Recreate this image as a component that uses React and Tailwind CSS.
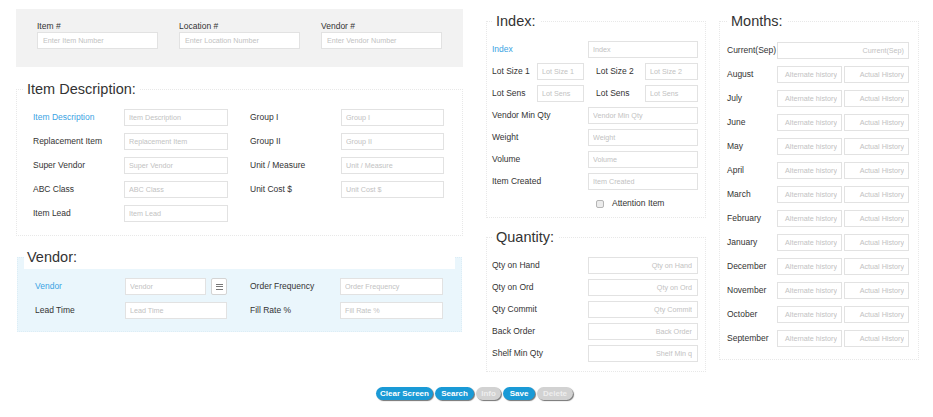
import React from "react";

const inputBase =
  "h-[17px] border border-[#e2e2e2] bg-white px-[4px] text-[7.2px] text-[#555] placeholder:text-[#c2c2c2] outline-none min-w-0";

function Field({ placeholder, className = "", right = false }) {
  return (
    <input
      readOnly
      placeholder={placeholder}
      className={`${inputBase} ${right ? "text-right" : "text-left"} ${className}`}
    />
  );
}

function Label({ children, blue = false, className = "" }) {
  return (
    <span
      className={`text-[8.5px] leading-[17px] whitespace-nowrap ${
        blue ? "text-[#3aa3e3]" : "text-[#333]"
      } ${className}`}
    >
      {children}
    </span>
  );
}

function Legend({ children, className = "" }) {
  return (
    <legend
      className={`h-[24px] text-[14.5px] leading-[24px] text-[#333] ${className}`}
    >
      {children}
    </legend>
  );
}

function Pair({ label, placeholder, blue, labelW, inputW }) {
  return (
    <div className="flex items-center">
      <Label blue={blue} className={labelW}>
        {label}
      </Label>
      <Field placeholder={placeholder} className={inputW} />
    </div>
  );
}

const months = [
  "August",
  "July",
  "June",
  "May",
  "April",
  "March",
  "February",
  "January",
  "December",
  "November",
  "October",
  "September",
];

function Btn({ children, active, w }) {
  return (
    <div
      className={`flex h-[13px] items-center justify-center rounded-full text-[8px] font-bold leading-none shadow-[1px_1px_1px_rgba(0,0,0,0.55)] ${w} ${
        active ? "bg-[#1a9ad6] text-white" : "bg-[#d2d2d2] text-[#eeeeee]"
      }`}
    >
      {children}
    </div>
  );
}

export default function App() {
  return (
    <div className="w-[933px] h-[417px] bg-white font-['Liberation_Sans',Arial,sans-serif] overflow-hidden">
      <div className="flex items-start pl-[16px] pt-[9px]">
        {/* Left column */}
        <div className="w-[447px] flex flex-col">
          {/* Top bar */}
          <div className="h-[58px] bg-[#f2f2f2] pl-[21px] pt-[12px] flex gap-[21px]">
            {[
              ["Item #", "Enter Item Number"],
              ["Location #", "Enter Location Number"],
              ["Vendor #", "Enter Vendor Number"],
            ].map(([l, p]) => (
              <div key={l} className="flex flex-col w-[121px]">
                <span className="text-[8.5px] leading-[11px] text-[#333]">{l}</span>
                <Field placeholder={p} className="w-[121px] px-[5px]" />
              </div>
            ))}
          </div>

          {/* Item Description */}
          <fieldset className="mt-[10px] border border-dotted border-[#e8e8e8] px-[7px]">
            <Legend className="px-[3px]">Item Description:</Legend>
            <div className="pl-[9px] pt-[8px] pb-[13px] grid grid-cols-[195px_194px] gap-x-[22px] gap-y-[7px]">
              <Pair label="Item Description" placeholder="Item Description" blue labelW="w-[91px]" inputW="w-[104px]" />
              <Pair label="Group I" placeholder="Group I" labelW="w-[91px]" inputW="w-[103px]" />
              <Pair label="Replacement Item" placeholder="Replacement Item" labelW="w-[91px]" inputW="w-[104px]" />
              <Pair label="Group II" placeholder="Group II" labelW="w-[91px]" inputW="w-[103px]" />
              <Pair label="Super Vendor" placeholder="Super Vendor" labelW="w-[91px]" inputW="w-[104px]" />
              <Pair label="Unit / Measure" placeholder="Unit / Measure" labelW="w-[91px]" inputW="w-[103px]" />
              <Pair label="ABC Class" placeholder="ABC Class" labelW="w-[91px]" inputW="w-[104px]" />
              <Pair label="Unit Cost $" placeholder="Unit Cost $" labelW="w-[91px]" inputW="w-[103px]" />
              <Pair label="Item Lead" placeholder="Item Lead" labelW="w-[91px]" inputW="w-[104px]" />
            </div>
          </fieldset>

          {/* Vendor */}
          <fieldset className="mt-[9px] mx-[1px] border border-dotted border-[#dcedf6] bg-[#eaf6fc] px-[6px]">
            <Legend className="w-full bg-white pl-[3px]">Vendor:</Legend>
            <div className="pl-[11px] pt-[9px] pb-[12px] grid grid-cols-[192px_193px] gap-x-[23px] gap-y-[7px]">
              <div className="flex items-center">
                <Label blue className="w-[90px]">Vendor</Label>
                <Field placeholder="Vendor" className="w-[81px]" />
                <div className="ml-[5px] flex h-[17px] w-[16px] flex-col items-center justify-center gap-[1.5px] rounded-[2px] border border-[#d4d4d4] bg-white">
                  <span className="block h-[1px] w-[7px] bg-[#777]" />
                  <span className="block h-[1px] w-[7px] bg-[#777]" />
                  <span className="block h-[1px] w-[7px] bg-[#777]" />
                </div>
              </div>
              <Pair label="Order Frequency" placeholder="Order Frequency" labelW="w-[90px]" inputW="w-[103px]" />
              <Pair label="Lead Time" placeholder="Lead Time" labelW="w-[90px]" inputW="w-[102px]" />
              <Pair label="Fill Rate %" placeholder="Fill Rate %" labelW="w-[90px]" inputW="w-[103px]" />
            </div>
          </fieldset>
        </div>

        {/* Middle column */}
        <div className="ml-[23px] w-[220px] flex flex-col">
          <fieldset className="border border-dotted border-[#e8e8e8] px-[5px]">
            <Legend className="px-[4px]">Index:</Legend>
            <div className="pt-[8px] pb-[5px] flex flex-col gap-[5px]">
              <Pair label="Index" placeholder="Index" blue labelW="w-[96px]" inputW="w-[110px]" />
              <div className="flex items-center">
                <Label className="w-[45px]">Lot Size 1</Label>
                <Field placeholder="Lot Size 1" className="w-[47px]" />
                <Label className="ml-[12px] w-[49px]">Lot Size 2</Label>
                <Field placeholder="Lot Size 2" className="w-[53px]" />
              </div>
              <div className="flex items-center">
                <Label className="w-[45px]">Lot Sens</Label>
                <Field placeholder="Lot Sens" className="w-[47px]" />
                <Label className="ml-[12px] w-[49px]">Lot Sens</Label>
                <Field placeholder="Lot Sens" className="w-[53px]" />
              </div>
              <Pair label="Vendor Min Qty" placeholder="Vendor Min Qty" labelW="w-[96px]" inputW="w-[110px]" />
              <Pair label="Weight" placeholder="Weight" labelW="w-[96px]" inputW="w-[110px]" />
              <Pair label="Volume" placeholder="Volume" labelW="w-[96px]" inputW="w-[110px]" />
              <Pair label="Item Created" placeholder="Item Created" labelW="w-[96px]" inputW="w-[110px]" />
              <div className="flex h-[17px] items-center pl-[104px]">
                <span className="block h-[8px] w-[8px] rounded-[2px] border border-[#b5b5b5] bg-[#ececec]" />
                <Label className="ml-[8px]">Attention Item</Label>
              </div>
            </div>
          </fieldset>

          <fieldset className="mt-[7px] border border-dotted border-[#e8e8e8] px-[5px]">
            <Legend className="px-[4px]">Quantity:</Legend>
            <div className="pt-[8px] pb-[9px] flex flex-col gap-[5px]">
              {["Qty on Hand", "Qty on Ord", "Qty Commit", "Back Order"].map((q) => (
                <div key={q} className="flex items-center">
                  <Label className="w-[96px]">{q}</Label>
                  <Field placeholder={q} right className="w-[110px] pr-[5px]" />
                </div>
              ))}
              <div className="flex items-center">
                <Label className="w-[96px]">Shelf Min Qty</Label>
                <Field placeholder="Shelf Min q" right className="w-[110px] pr-[5px]" />
              </div>
            </div>
          </fieldset>
        </div>

        {/* Right column */}
        <div className="ml-[13px] w-[200px]">
          <fieldset className="border border-dotted border-[#e8e8e8] px-[7px]">
            <Legend className="px-[4px]">Months:</Legend>
            <div className="pt-[9px] pb-[12px] flex flex-col gap-[7px]">
              <div className="flex items-center">
                <Label className="w-[50px]">Current(Sep)</Label>
                <Field placeholder="Current(Sep)" right className="w-[132px]" />
              </div>
              {months.map((m) => (
                <div key={m} className="flex items-center">
                  <Label className="w-[50px]">{m}</Label>
                  <Field placeholder="Alternate history" right className="w-[65px]" />
                  <Field placeholder="Actual History" right className="ml-[2px] w-[65px]" />
                </div>
              ))}
            </div>
          </fieldset>
        </div>
      </div>

      {/* Buttons */}
      <div className="mt-[15px] flex justify-center gap-[2px] pl-[16px]">
        <Btn active w="w-[57px]">Clear Screen</Btn>
        <Btn active w="w-[39px]">Search</Btn>
        <Btn w="w-[25px]">Info</Btn>
        <Btn active w="w-[32px]">Save</Btn>
        <Btn w="w-[36px]">Delete</Btn>
      </div>
    </div>
  );
}
